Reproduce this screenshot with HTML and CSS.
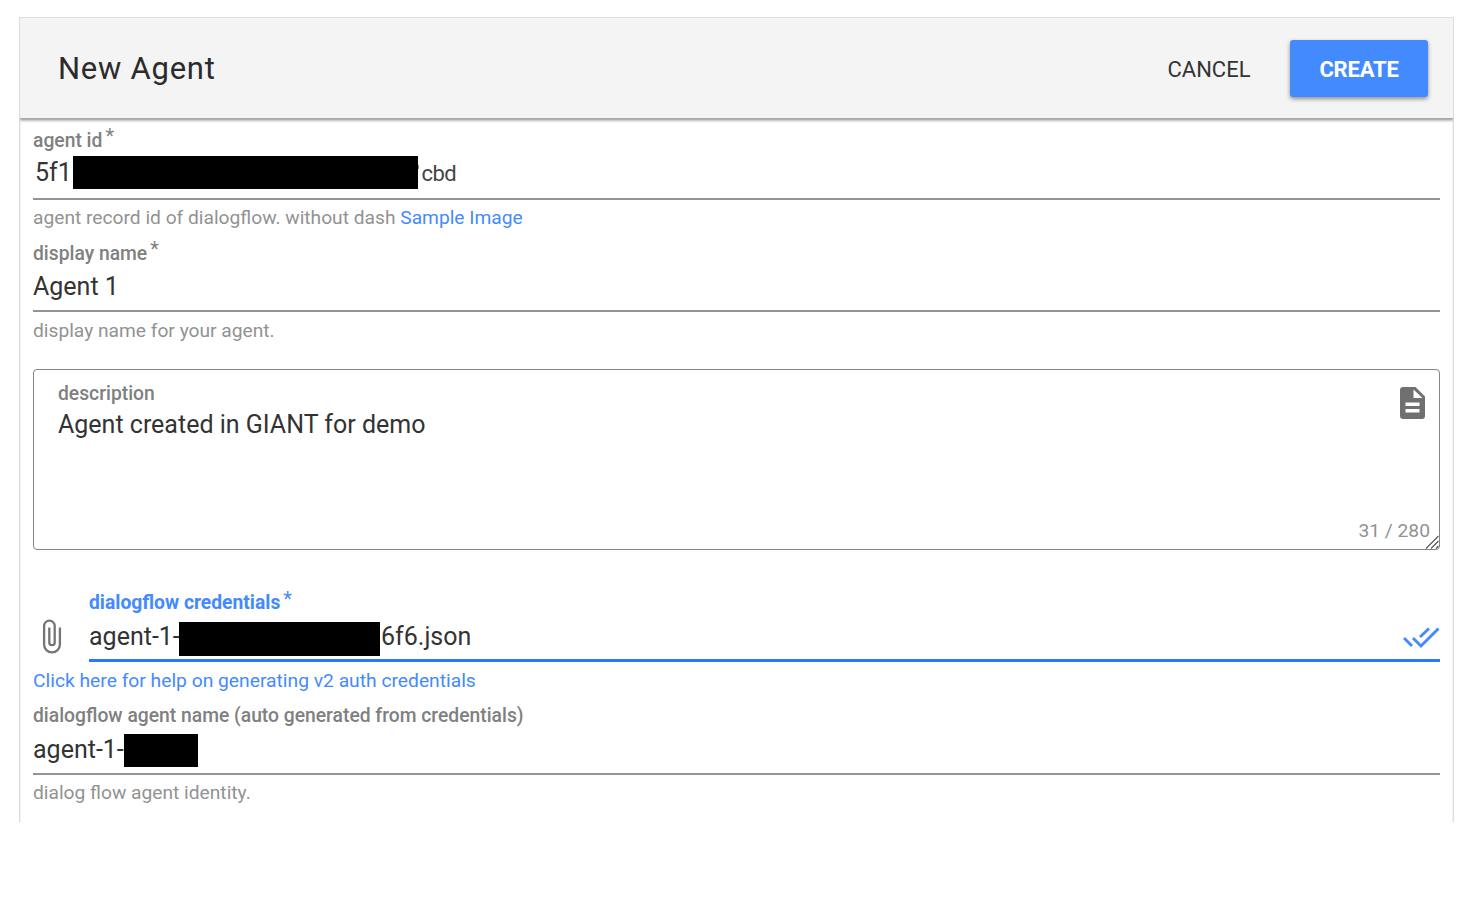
FILE: index.html
```html
<!DOCTYPE html>
<html lang="en">
<head>
<meta charset="utf-8">
<title>New Agent</title>
<link rel="stylesheet" href="styles.css">
</head>
<body>
<main class="card">
  <header class="toolbar">
    <h1 class="title"><span>New Agent</span></h1>
    <button class="btn btn-flat"><span>CANCEL</span></button>
    <button class="btn btn-raised"><span>CREATE</span></button>
  </header>
  <form class="form">
    <section class="field field-id">
      <label class="label"><span>agent id</span><sup class="star">*</sup></label>
      <div class="value"><span class="id-start">5f1</span><span class="redacted redacted-id"></span><span class="id-trace"></span><span class="id-end">cbd</span></div>
      <div class="hint"><span>agent record id of dialogflow. without dash</span> <a class="link">Sample Image</a></div>
    </section>
    <section class="field field-name">
      <label class="label"><span>display name</span><sup class="star">*</sup></label>
      <div class="value"><span>Agent 1</span></div>
      <div class="hint"><span>display name for your agent.</span></div>
    </section>
    <section class="textarea">
      <div class="textarea-main">
        <label class="label"><span>description</span></label>
        <div class="textarea-value"><span>Agent created in GIANT for demo</span></div>
      </div>
      <div class="textarea-side">
        <svg class="doc-icon" viewBox="0 0 25 32"><path fill="#707070" fill-rule="evenodd" d="M3 0H15.500L25 9.500V29Q25 32 22 32H3Q0 32 0 29V3Q0 0 3 0ZM13.500 2.500V11H22.500ZM5.500 15.500V19H19.500V15.500ZM5.500 22V25.500H19.500V22Z"/></svg>
        <span class="counter">31 / 280</span>
      </div>
      <svg class="grip" viewBox="0 0 14 14"><path d="M1 13.500L13.500 1M6 13.500L13.500 6M11 13.500L13.500 11" stroke="#555" stroke-width="1.100" fill="none"/></svg>
    </section>
    <section class="credentials">
      <svg class="clip-icon" viewBox="0 0 20 36"><path d="M17.900 8.500V25.500A7.900 7.900 0 0 1 2.100 25.500V7A5.300 5.300 0 0 1 12.700 7V23.500A2.700 2.700 0 0 1 7.300 23.500V8.500" fill="none" stroke="#757575" stroke-width="2.300"/></svg>
      <div class="credentials-field">
        <label class="label label-active"><span>dialogflow credentials</span><sup class="star">*</sup></label>
        <div class="value value-active"><span class="slug">agent-1-</span><span class="redacted redacted-file"></span><span class="file-end">6f6.json</span>
          <svg class="check-icon" viewBox="0 0 38 24"><path d="M2 12L10 20M11 12L19 20L36.500 2.500M18 11L27 2.500" fill="none" stroke="#448aff" stroke-width="2.900"/></svg>
        </div>
      </div>
    </section>
    <div class="help"><a class="link"><span>Click here for help on generating v2 auth credentials</span></a></div>
    <section class="field field-agent">
      <label class="label"><span>dialogflow agent name (auto generated from credentials)</span></label>
      <div class="value"><span class="slug">agent-1-</span><span class="redacted redacted-name"></span></div>
      <div class="hint"><span>dialog flow agent identity.</span></div>
    </section>
  </form>
</main>
</body>
</html>
```
FILE: styles.css
```css
* { box-sizing: border-box; }
body { margin: 0; padding: 17px 18px 0 19px; background: #fff; font-family: Roboto, sans-serif; color: #333; }
.card { height: 805px; border: 1px solid #dedede; border-bottom: 0; box-shadow: inset 1px 0 #f2f2f2, inset -1px 0 #f2f2f2; }
.toolbar { display: flex; align-items: center; height: 101px; padding: 1px 25px 0 38px; background: #f4f4f4; border-bottom: 1px solid #aaa; box-shadow: 0 1px 3px rgba(0,0,0,.5); clip-path: inset(0 0 -6px 0); }
.title { flex: 1; margin: 0; font-size: 31px; font-weight: 400; letter-spacing: .75px; color: #2b2b2b; }
.btn { border: 0; padding: 1px 0 0; font-family: inherit; font-size: 22px; height: 57px; border-radius: 3px; white-space: nowrap; }
.btn-flat { width: 84px; margin-right: 39px; background: none; color: #333; font-weight: 400; }
.btn-raised { width: 138px; background: #448aff; color: #fff; font-weight: 700; letter-spacing: -.2px; box-shadow: 0 2px 4px rgba(0,0,0,.42); }
.form { padding: 9px 13px 0; }
.field { height: 113px; }
.label { display: flex; height: 24px; line-height: 26px; font-size: 19.300px; font-weight: 500; color: #808080; white-space: nowrap; }
.star { font-size: 20px; line-height: 16px; margin-left: 3px; font-weight: 400; }
.value { display: flex; align-items: center; height: 48px; padding-bottom: 2px; border-bottom: 2px solid #949494; font-size: 25px; color: #333; white-space: nowrap; }
.hint { height: 36px; line-height: 36px; font-size: 19.200px; color: #929292; white-space: nowrap; }
.link { color: #448aff; }
.redacted { background: #000; height: 33px; }
.field-id .value { padding-bottom: 5px; }
.id-start { width: 40px; padding-left: 2px; }
.redacted-id { width: 345px; }
.id-trace { width: 1px; height: 4px; margin-bottom: 12px; background: #888; }
.id-end { margin-left: 2.500px; padding-top: 2px; font-size: 22px; letter-spacing: -.5px; color: #444; }
.field-name .value { height: 47px; }
.field-name .hint { line-height: 38px; }
.textarea { position: relative; display: flex; justify-content: space-between; height: 181px; margin-top: 15px; padding: 11px 9px 7px 24px; border: 1px solid #858585; border-radius: 4px; }
.textarea-value { height: 38px; line-height: 39px; font-size: 25px; }
.textarea-side { display: flex; flex-direction: column; justify-content: space-between; align-items: flex-end; padding-top: 6px; }
.doc-icon { width: 25px; height: 32px; margin-right: 5px; }
.counter { font-size: 19.250px; line-height: 22px; color: #929292; }
.grip { position: absolute; right: 0; bottom: 0; width: 14px; height: 14px; }
.credentials { display: flex; align-items: flex-start; margin-top: 41px; }
.clip-icon { width: 20px; height: 36px; margin: 28px 27px 0 9px; }
.credentials-field { flex: 1; }
.label-active { color: #448aff; font-weight: 700; line-height: 24px; }
.value-active { height: 47px; padding-bottom: 2px; border-bottom: 3px solid #2979ff; }
.redacted-file { width: 201px; height: 34px; margin-top: 5px; }
.slug { width: 91px; }
.credentials .slug { width: 90px; }
.file-end { margin-left: 1px; }
.check-icon { width: 38px; height: 24px; margin: 3px 0 0 auto; }
.help { height: 41px; line-height: 38px; font-size: 19.250px; white-space: nowrap; }
.redacted-name { width: 74px; margin-top: 2px; }
```
